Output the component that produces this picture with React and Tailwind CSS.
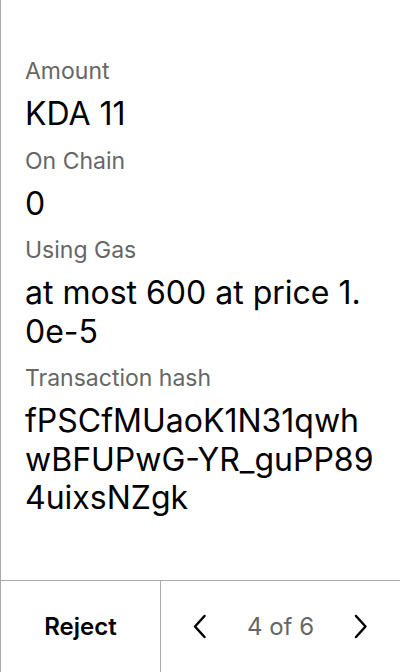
import React from "react";

const fields = [
  { label: "Amount", value: "KDA 11" },
  { label: "On Chain", value: "0" },
  { label: "Using Gas", value: "at most 600 at price 1.0e-5" },
  { label: "Transaction hash", value: "fPSCfMUaoK1N31qwhwBFUPwG-YR_guPP894uixsNZgk" },
];

function Chevron({ dir }) {
  const d = dir === "left" ? "M12.5 2 L3 12.5 L12.5 23" : "M3 2 L12.5 12.5 L3 23";
  return (
    <svg width="16" height="25" viewBox="0 0 16 25" fill="none">
      <path d={d} stroke="#000" strokeWidth="2.5" strokeLinecap="round" strokeLinejoin="round" />
    </svg>
  );
}

export default function App() {
  return (
    <div
      className="w-[400px] h-[672px] bg-white flex flex-col border-l border-[#a9a9a9]"
      style={{ fontFamily: "Inter, 'Noto Sans', sans-serif" }}
    >
      {/* details */}
      <div className="flex-1 flex flex-col gap-[13px] pt-[57px] pl-[24px] pr-[25px]">
        {fields.map((f) => (
          <div key={f.label} className="flex flex-col gap-[10px]">
            <div className="text-[23px] leading-[28px] text-[#666]">{f.label}</div>
            <div className="text-[32px] leading-[38.5px] text-black break-all">{f.value}</div>
          </div>
        ))}
      </div>

      {/* footer */}
      <div className="h-[92px] border-t border-[#a9a9a9] flex">
        <button className="w-[160px] border-r border-[#a9a9a9] flex items-center justify-center text-[24px] font-semibold text-black">
          Reject
        </button>
        <div className="flex-1 flex items-center justify-between px-[31px]">
          <button className="flex items-center">
            <Chevron dir="left" />
          </button>
          <span className="text-[24px] text-[#666]">4 of 6</span>
          <button className="flex items-center">
            <Chevron dir="right" />
          </button>
        </div>
      </div>
    </div>
  );
}
